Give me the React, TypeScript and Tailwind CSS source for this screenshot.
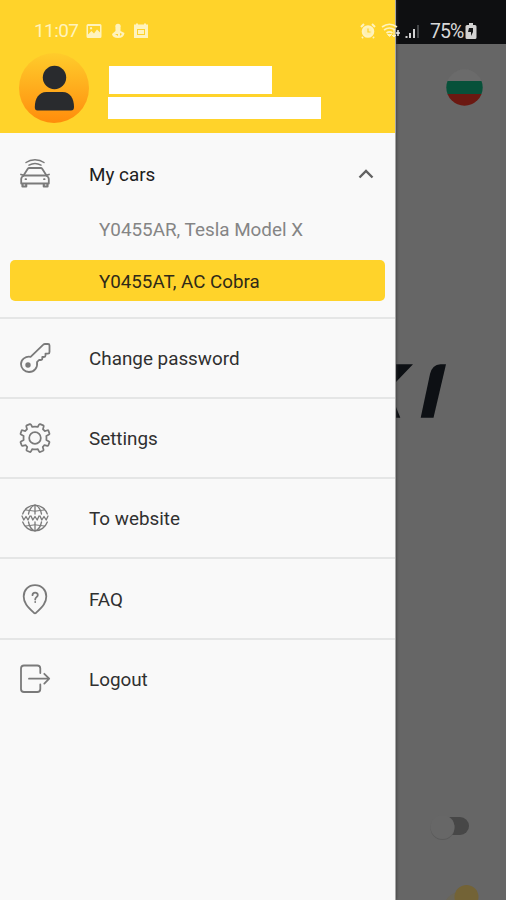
import React from "react";

interface MenuRowProps {
  icon: React.ReactNode;
  label: string;
}

const stroke = {
  fill: "none",
  stroke: "#7a7a7a",
  strokeWidth: 1.8,
  strokeLinecap: "round" as const,
  strokeLinejoin: "round" as const,
};

function CarIcon() {
  return (
    <svg width="32" height="32" viewBox="0 0 32 32" {...stroke}>
      <path d="M7 4.500C12 .8 20 .8 25 4.500M10 7.200c3.500-2 8.500-2 12 0" strokeWidth="1.500" />
      <path d="M4.500 17.500L8.800 10.800Q9.300 10 10.300 10H21.700Q22.700 10 23.200 10.800L27.500 17.500" />
      <path d="M5.500 17.500H26.500Q29.800 18.500 29.800 21V25.500H2.200V21Q2.200 18.500 5.500 17.500ZM2 16.500l2.800.8M30 16.500l-2.800.8" />
      <path d="M3.500 26.500v2h3.700v-2M24.800 26.500v2h3.700v-2" strokeWidth="2.200" />
      <path d="M6.500 21.200h.6M25 21.200h.6" strokeWidth="1.800" />
    </svg>
  );
}

function KeyIcon() {
  return (
    <svg width="32" height="32" viewBox="0 0 32 32" {...stroke}>
      <path d="M11.600 14.800L24.300 2.700Q25 2 26 2H29Q30.500 2 30.500 3.500V10Q30.500 11.600 29 11.600H26.500V13.500Q26.500 15 25 15H23.300V16.500Q23.300 18 21.500 18H20L18 20.200C19 25.500 15.200 30 10 30A8 8 0 0 1 2 22C2 17.500 6.500 13.800 11.600 14.800Z" />
      <circle cx="9" cy="23" r="1.800" fill="#7a7a7a" />
    </svg>
  );
}

function GearIcon() {
  return (
    <svg width="32" height="32" viewBox="-.5 -.5 33 33" {...stroke}>
      <path d="M13.200 4.600Q16 3.800 18.800 4.600L20.300 2Q20.700 1.500 21.300 1.700L24.500 3Q25.100 3.300 25 4L24.200 7Q25.300 7.900 26 8.900L29 8Q29.700 7.900 29.900 8.500L30.900 11.500Q31 12 30.400 12.400L27.700 14Q28 16 27.700 18L30.400 19.600Q31 20 30.900 20.500L29.700 23.700Q29.400 24.300 28.700 24.100L25.700 23.300Q24.900 24.400 24 25.200L24.800 28.200Q24.900 28.900 24.300 29.200L21.300 30.400Q20.700 30.600 20.300 30L18.800 27.400Q16 28.200 13.200 27.400L11.700 30Q11.300 30.600 10.700 30.400L7.700 29.200Q7.100 28.900 7.200 28.200L8 25.200Q7.100 24.400 6.300 23.300L3.300 24.100Q2.600 24.300 2.300 23.700L1.100 20.500Q1 20 1.600 19.600L4.300 18Q4 16 4.300 14L1.600 12.400Q1 12 1.100 11.500L2.100 8.500Q2.300 7.900 3 8L6 8.900Q6.700 7.900 7.800 7L7 4Q6.900 3.300 7.500 3L10.700 1.700Q11.300 1.500 11.700 2Z" />
      <circle cx="16" cy="16" r="6" />
    </svg>
  );
}

function GlobeIcon() {
  return (
    <svg width="32" height="32" viewBox="0 0 32 32" {...stroke} strokeWidth="1.300">
      <path d="M3.700 12A13 13 0 0 1 28.300 12M3.700 20A13 13 0 0 0 28.300 20" />
      <path d="M16 3v9M16 20v9M9.500 12C10.300 8 12.500 4 16 3C19.500 4 21.700 8 22.500 12M9.500 20C10.300 24 12.500 28 16 29C19.500 28 21.700 24 22.500 20" />
      <path d="M6.500 8q9.500 2.500 19 0M6.500 24q9.500-2.500 19 0" strokeWidth="1" />
      <path d="M3 14l1.800 4L7 14.500L9 18l2-4M12 14l1.800 4L16 14.500l2.200 3.500l1.800-4M21 14l1.800 4l2.200-3.500L27.200 18l1.800-4" />
    </svg>
  );
}

function FaqIcon() {
  return (
    <svg width="32" height="32" viewBox="0 0 32 32" {...stroke}>
      <path d="M16 2.200C9.300 2.200 4.700 7 4.700 13.500C4.700 19.500 8 23.500 14.800 29.700Q16 30.700 17.200 29.700C24 23.500 27.300 19.500 27.300 13.500C27.300 7 22.700 2.200 16 2.200Z" />
      <path d="M13.500 12.200C13.500 8.800 18.800 8.800 18.800 12C18.800 14.200 16.200 14.200 16.200 16.500M16.200 19v.1" />
    </svg>
  );
}

function LogoutIcon() {
  return (
    <svg width="32" height="32" viewBox="0 0 32 32" {...stroke}>
      <path d="M21.300 10V5.500Q21.300 2.500 18.300 2.500H5Q2 2.500 2 5.500V26Q2 29 5 29H18.300Q21.300 29 21.300 26V21.500M10 15.700H30M25.300 10.800L30.200 15.700L25.300 20.600" />
    </svg>
  );
}

function MenuRow({ icon, label }: MenuRowProps) {
  return (
    <div className="flex h-[80.3px] items-center border-t-2 border-[#e5e6e6] pl-[19px]">
      {icon}
      <span className="ml-[38px] pt-[2px] text-[18.850px] text-[#303030]">{label}</span>
    </div>
  );
}

function StatusBar() {
  return (
    <div className="absolute left-0 top-0 z-20 flex h-[62px] w-[506px] items-center text-[19px] text-[#fff3bd]">
      <span className="w-[86px] shrink-0 pl-[34px] tracking-[-0.6px]">11:07</span>
      <svg className="shrink-0" width="64" height="16" viewBox="0 0 64 16" fill="currentColor">
        <path fillRule="evenodd" d="M2 1h12q1.500 0 1.500 1.500v11Q15.500 15 14 15H2Q.5 15 .5 13.500v-11Q.5 1 2 1ZM2 3v8.500l3.500-3.500l2.500 2.500L11 6.500l3 3V3ZM5 4a1.200 1.200 0 1 0 .1 0Z" />
        <circle cx="32" cy="3.500" r="2.700" />
        <path fillRule="evenodd" d="M29.500 5h5v3l4 2q-.5 5-6.500 5q-5.500 0-6-4l3.500-3ZM29 11h3v2ZM34 10l2 1l-2 2Z" />
        <path fillRule="evenodd" d="M48 1.500h2V.5h2v1h6v-1h2v1h2V15H48ZM51 6v6h8V6ZM52 7h6v4h-6Z" />
      </svg>
      <svg className="ml-[210px] shrink-0" width="60" height="18" viewBox="0 0 60 18">
        <path d="M1 5l3-3M12 2l3 3M3 15l-1 1M13 15l1 1" stroke="#fff3bd" strokeWidth="2" />
        <circle cx="8" cy="9.500" r="5.100" fill="#fff0ad" stroke="#fff3bd" strokeWidth="2.400" />
        <path d="M8 6.500V10h2.500" fill="none" stroke="#ffd32a" strokeWidth="1.200" />
        <path d="M22 5Q29.500-.5 37 5M24 8Q29.500 4 35 8M26.500 11Q29.500 8.800 32.500 11" fill="none" stroke="#fff3bd" strokeWidth="1.700" />
        <path d="M29.500 14.500l-2-2h4ZM34 7v8m-2-2l2 2l2-2" fill="#fff3bd" stroke="#fff3bd" />
        <path d="M38 8v6m-2-3h4" stroke="#e8e8e8" strokeWidth="1.500" />
        <path d="M46.500 16v-2M50 16v-5M54 16V7" stroke="#d2d2d2" strokeWidth="2" />
        <path d="M58 16V3" stroke="#56585a" strokeWidth="1.500" />
      </svg>
      <span className="ml-[10px] w-[35px] pt-px text-[19.500px] tracking-[-1px] text-[#d8d8d8]">75%</span>
      <svg className="shrink-0" width="12" height="16" viewBox="0 0 12 16">
        <path d="M4 0h4v2h2q1.500 0 1.500 1.500v11Q11.500 16 10 16H2Q.5 16 .5 14.500v-11Q.5 2 2 2h2Z" fill="#d2d2d2" />
        <path d="M4 5h4v4L6 13V9H3Z" fill="#151617" />
      </svg>
    </div>
  );
}

function Backdrop() {
  return (
    <div className="flex h-full w-[110px] flex-col bg-[#666]">
      <div className="h-[44px] bg-[#0e0f11]" />
      <svg className="ml-[50px] mt-[25px] shrink-0" width="37" height="37" viewBox="0 0 37 37">
        <clipPath id="flag">
          <circle cx="18.500" cy="18.500" r="18.200" />
        </clipPath>
        <g clipPath="url(#flag)">
          <path d="M0 0h37v12H0Z" fill="#6b6b6b" />
          <path d="M0 12h37v13H0Z" fill="#07513a" />
          <path d="M0 25h37v12H0Z" fill="#6b1811" />
        </g>
      </svg>
      <svg className="mt-[258px] shrink-0" width="60" height="54" viewBox="0 0 60 54" fill="#0d1014">
        <path d="M0 .3H17L0 18ZM0 43l4.300 10.700H0Z" />
        <path d="M50 .3H44.500Q36 1 34 10L24.700 53.700H37.500Z" />
      </svg>
      <svg className="ml-[32px] mt-[395px] shrink-0" width="44" height="30" viewBox="0 0 44 30">
        <rect x="8" y="4" width="33" height="18" rx="9" fill="#474747" />
        <circle cx="14.500" cy="15" r="12" fill="#5a5a5a" />
        <circle cx="14.500" cy="14" r="12" fill="#676767" />
      </svg>
      <svg className="ml-[44px] mt-[42px] shrink-0" width="50" height="15" viewBox="0 0 50 15">
        <path d="M6 15Q10 9 17 7V15Z" fill="#6a6658" />
        <circle cx="26.500" cy="12" r="12" fill="#736336" />
      </svg>
    </div>
  );
}

export default function App() {
  return (
    <div className="relative flex h-[900px] w-[506px] overflow-hidden bg-[#666] font-['Roboto',sans-serif]">
      <div className="z-10 h-full w-[396px] shrink-0 border-r border-[#a5a5a5] bg-[#f9f9f9] shadow-[0_0_3px_#333]">
        {/* Account header */}
        <div className="flex h-[133px] bg-[#ffd32a] pl-[19px] pt-[53px]">
          <div className="flex h-[70px] w-[70px] items-center justify-center rounded-full bg-linear-to-b from-[#ffcc2b] to-[#ff8c0a]">
            <svg width="40" height="46" viewBox="0 0 40 46" fill="#292b2e">
              <circle cx="20.500" cy="12.500" r="11.700" />
              <path d="M12.500 27H28.500C36.500 27 40 34 40 42Q40 45.500 37 45.500H3.500Q.8 45.500 .8 42C.8 34 4.500 27 12.500 27Z" />
            </svg>
          </div>
          <div className="ml-[19px] pt-[13px]">
            <div className="ml-px h-[28px] w-[163px] bg-white" />
            <div className="mt-[3px] h-[22px] w-[213px] bg-white" />
          </div>
        </div>

        {/* Cars */}
        <div className="h-[183.6px]">
          <div className="flex h-[82px] items-center pl-[19px]">
            <CarIcon />
            <span className="ml-[38px] pt-[2px] text-[18.850px] text-[#202020]">My cars</span>
            <svg className="ml-auto mr-[21px]" width="16" height="10" viewBox="0 0 16 10" fill="none" stroke="#626262" strokeWidth="2.400">
              <path d="M1.500 8.500L8 2L14.500 8.500" />
            </svg>
          </div>
          <div className="flex h-[30px] items-center pl-[99px] text-[18.850px] text-[#858585]">Y0455AR, Tesla Model X</div>
          <div className="ml-[10px] mt-[15px] flex h-[41px] w-[375px] items-center rounded-[5px] bg-[#ffd32a] pl-[89px] pt-[3px] text-[18.750px] text-[#2f2a18]">
            Y0455AT, AC Cobra
          </div>
        </div>

        <MenuRow icon={<KeyIcon />} label="Change password" />
        <MenuRow icon={<GearIcon />} label="Settings" />
        <MenuRow icon={<GlobeIcon />} label="To website" />
        <MenuRow icon={<FaqIcon />} label="FAQ" />
        <MenuRow icon={<LogoutIcon />} label="Logout" />
      </div>
      <Backdrop />
      <StatusBar />
    </div>
  );
}
